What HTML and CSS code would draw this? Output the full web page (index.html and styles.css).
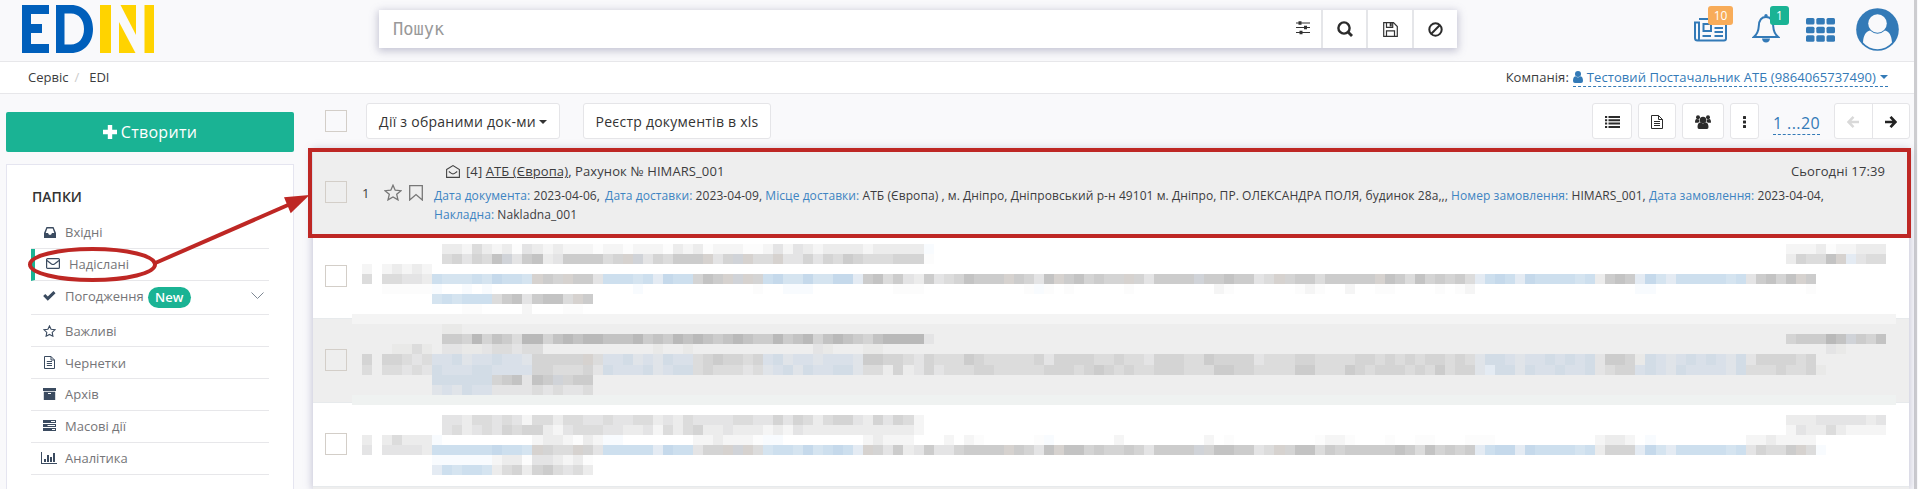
FILE: index.html
```
<!DOCTYPE html>
<html lang="uk">
<head>
<meta charset="utf-8">
<title>EDIN</title>
<link rel="stylesheet" href="styles.css">
</head>
<body>
<div class="page">
  <header class="topbar">
    <svg class="logo" width="132" height="48" viewBox="0 0 132 48">
      <g fill="#005fbb"><path d="M0 0H27V9H9V19H20V28H9V39H27V48H0Z"/><path fill-rule="evenodd" d="M34 0H49C62 0 71 10 71 24S62 48 49 48H34ZM42.500 8.500V39.500H49C57 39.500 62 33 62 24S57 8.500 49 8.500Z"/></g>
      <g fill="#ffd300"><path d="M78 0H89V48H78Z"/><path d="M98.500 0H114V30Z"/><path d="M97 17V48H113.500Z"/><path d="M122.500 0H132V48H122.500Z"/></g>
    </svg>
    <div class="search">
      <div class="search-field"><span class="placeholder">Пошук</span>
        <svg width="14" height="14" viewBox="0 0 14 14" fill="none" stroke="#333"><path d="M0 2H14M0 6.500H14M0 11.500H14" stroke-width="1.200"/><path d="M4 .3V3.700M9.500 4.800V8.200M5 9.800V13.200" stroke-width="3"/></svg>
      </div>
      <div class="search-btn"><svg width="16" height="16" viewBox="0 0 16 16" fill="none" stroke="#2b2b2b"><circle cx="7" cy="7" r="5.600" stroke-width="2.400"/><path d="M11 11L15 15" stroke-width="2.800"/></svg></div>
      <div class="search-btn"><svg width="15" height="15" viewBox="0 0 15 15" fill="none" stroke="#333" stroke-width="1.200"><path d="M.7 .7H10.500L14.300 4.500V14.300H.7ZM3.500 14V8.800H11.500V14M3.500 .7V5.300H9.700V.7"/><path d="M7.700 1V4.500" stroke-width="2"/></svg></div>
      <div class="search-btn"><svg width="15" height="15" viewBox="0 0 15 15" fill="none" stroke="#2b2b2b" stroke-width="2"><circle cx="7.500" cy="7.500" r="6.200"/><path d="M3.300 11.700L11.700 3.300"/></svg></div>
    </div>
    <nav class="user-nav">
      <div class="nav-ico news"><svg width="33" height="24" viewBox="0 0 33 24" fill="none" stroke="#337ab7" stroke-width="2"><path d="M5 1H32V20.500Q32 22.500 30 22.500H3.500Q1 22.500 1 20V4.500H5V20Q5 22.500 3.500 22.500"/><path d="M9.500 6H17V13H9.500ZM20.500 6H29M20.500 10H29M20.500 14H29M8.500 18H17M20.500 18H29"/></svg><span class="badge orange">10</span></div>
      <div class="nav-ico bell"><svg width="28" height="29" viewBox="0 0 28 29"><path d="M14 3C8.500 3 7 8 6.800 12C6.500 17.500 5 20.500 1.800 23H26.200C23 20.500 21.500 17.500 21.200 12C21 8 19.500 3 14 3Z" fill="none" stroke="#337ab7" stroke-width="2"/><path d="M10 24.500H18Q17.500 28.500 14 28.500T10 24.500Z" fill="#337ab7"/><circle cx="14" cy="1.800" r="1.700" fill="#337ab7"/></svg><span class="badge green">1</span></div>
      <svg class="apps" width="29" height="24" viewBox="0 0 29 24" fill="#337ab7"><rect width="8.500" height="6.500" rx="1.500"/><rect x="10.300" width="8.500" height="6.500" rx="1.500"/><rect x="20.500" width="8.500" height="6.500" rx="1.500"/><rect y="8.700" width="8.500" height="6.500" rx="1.500"/><rect x="10.300" y="8.700" width="8.500" height="6.500" rx="1.500"/><rect x="20.500" y="8.700" width="8.500" height="6.500" rx="1.500"/><rect y="17.300" width="8.500" height="6.500" rx="1.500"/><rect x="10.300" y="17.300" width="8.500" height="6.500" rx="1.500"/><rect x="20.500" y="17.300" width="8.500" height="6.500" rx="1.500"/></svg>
      <svg class="avatar" width="43" height="43" viewBox="0 0 43 43"><circle cx="21.500" cy="21.500" r="21.300" fill="#337ab7"/><path d="M7 34.500C7.500 27 10 23.500 14 22.500Q21.500 29 29 22.500C33 23.500 35.500 27 36 34.500A19 19 0 0 1 7 34.500Z" fill="#f9f9fb"/><circle cx="21.500" cy="15.500" r="9.300" fill="#f9f9fb"/></svg>
    </nav>
  </header>

  <div class="crumbs">
    <div class="trail"><span>Сервіс</span><span class="slash">/</span><span>EDI</span></div>
    <div class="company"><span>Компанія:</span><a><svg width="10" height="12" viewBox="0 0 10 12" fill="#337ab7"><circle cx="5" cy="3" r="3"/><path d="M0 10C0 7 1 5.500 2.300 5.300Q5 7.500 7.700 5.300C9 5.500 10 7 10 10Q10 12 8 12H2Q0 12 0 10Z"/></svg>Тестовий Постачальник АТБ (9864065737490)<i class="caret"></i></a></div>
  </div>

  <div class="content">
    <aside class="side">
      <button class="create"><svg width="14" height="14" viewBox="0 0 14 14" fill="#fff"><path d="M4.800 0H9.200V4.800H14V9.200H9.200V14H4.800V9.200H0V4.800H4.800Z"/></svg>Створити</button>
      <div class="folders">
        <h5>ПАПКИ</h5>
        <ul>
          <li><svg width="12" height="11" viewBox="0 0 12 11" fill="#3b4b60"><path fill-rule="evenodd" d="M2.500 0H9.500L12 6V11H0V6ZM3.300 1.500L1.700 6H4L5 7.700H7L8 6H10.300L8.700 1.500Z"/></svg><span>Вхідні</span></li>
          <li class="active"><svg width="14" height="11" viewBox="0 0 14 11" fill="none" stroke="#3b4b60" stroke-width="1.200"><rect x=".6" y=".6" width="12.800" height="9.800" rx="1"/><path d="M1 2.500L5.500 6Q7 7 8.500 6L13 2.500"/></svg><span>Надіслані</span></li>
          <li class="tall"><svg width="13" height="10" viewBox="0 0 13 10" fill="none" stroke="#3b4b60" stroke-width="3"><path d="M1.200 4L4.800 7.600L11.500 1.200"/></svg><span>Погодження</span><b class="new">New</b><svg class="chev" width="13" height="8" viewBox="0 0 13 8" fill="none" stroke="#7d8793"><path d="M.5 .5L6.500 6.500L12.500 .5"/></svg></li>
          <li class="low"><svg width="13" height="12" viewBox="0 0 13 12" fill="none" stroke="#3b4b60" stroke-width="1.100"><path d="M6.500 .9L8.100 4.300L12 4.800L9.200 7.400L9.900 11.200L6.500 9.400L3.100 11.200L3.800 7.400L1 4.800L4.900 4.300Z"/></svg><span>Важливі</span></li>
          <li class="low"><svg width="11" height="13" viewBox="0 0 11 13" fill="none" stroke="#3b4b60"><path d="M.5 .5H7L10.500 4V12.500H.5ZM7 .5V4H10.500M2.800 5.500H8M2.800 7.500H8M2.800 9.500H8"/></svg><span>Чернетки</span></li>
          <li><svg width="13" height="12" viewBox="0 0 13 12" fill="#3b4b60"><path d="M0 0H13V3H0Z"/><path fill-rule="evenodd" d="M.8 3.800H12.200V12H.8ZM5 5V6H8V5Z"/></svg><span>Архів</span></li>
          <li><svg width="13" height="11" viewBox="0 0 13 11" fill="#3b4b60"><path fill-rule="evenodd" d="M0 0H13V3H0ZM8 1V2H12V1ZM0 4H13V7H0ZM4.500 5V6H12V5ZM0 8H13V11H0ZM9 9V10H12V9Z"/></svg><span>Масові дії</span></li>
          <li><svg width="16" height="12" viewBox="0 0 16 12" fill="#3b4b60"><path d="M0 0H1V11H16V12H0ZM3 7H5V10H3ZM6 3H8V10H6ZM9 5H11V10H9ZM12 1H14V10H12Z"/></svg><span>Аналітика</span></li>
        </ul>
      </div>
    </aside>

    <main class="main">
      <div class="tools">
        <i class="check"></i>
        <button class="btn wide1">Дії з обраними док-ми<i class="caret dark"></i></button>
        <button class="btn wide2">Реєстр документів в xls</button>
        <div class="tools-right">
          <button class="btn b1"><svg width="15" height="12" viewBox="0 0 15 12" fill="#2b2b2b"><path d="M0 0H2.200V2H0ZM3.500 0H15V2H3.500ZM0 3.300H2.200V5.300H0ZM3.500 3.300H15V5.300H3.500ZM0 6.600H2.200V8.600H0ZM3.500 6.600H15V8.600H3.500ZM0 10H2.200V12H0ZM3.500 10H15V12H3.500Z"/></svg></button>
          <button class="btn b2"><svg width="12" height="14" viewBox="0 0 12 14" fill="none" stroke="#2b2b2b"><path d="M.5 .5H7.500L11.500 4.500V13.500H.5ZM7.500 .5V4.500H11.500M3 6.500H9M3 8.500H9M3 10.500H9"/></svg></button>
          <button class="btn b3"><svg width="16" height="14" viewBox="0 0 16 14" fill="#2b2b2b"><circle cx="8" cy="5" r="3.200"/><circle cx="3" cy="2.200" r="2"/><circle cx="13" cy="2.200" r="2"/><path d="M2.500 12C2.500 9 3.800 7.600 5.500 7.300Q8 9.500 10.500 7.300C12.200 7.600 13.500 9 13.500 12Q13.500 14 12 14H4Q2.500 14 2.500 12Z"/><path d="M0 7.200C0 5 .8 4 1.500 4L4.300 4.500L4.500 6.500L3.200 7.800H1Q0 7.800 0 7.200ZM16 7.200C16 5 15.200 4 14.500 4L11.700 4.500L11.500 6.500L12.800 7.800H15Q16 7.800 16 7.200Z"/></svg></button>
          <button class="btn b4"><svg width="3" height="12" viewBox="0 0 3 12" fill="#2b2b2b"><rect width="3" height="3" rx=".5"/><rect y="4.500" width="3" height="3" rx=".5"/><rect y="9" width="3" height="3" rx=".5"/></svg></button>
          <a class="range">1 ...20</a>
          <div class="pager">
            <span class="off"><svg width="12" height="12" viewBox="0 0 12 12" fill="none" stroke="currentColor" stroke-width="2.500"><path d="M6.500 .9L1.600 6L6.500 11.100M2 6H12"/></svg></span>
            <span><svg width="12" height="12" viewBox="0 0 12 12" fill="none" stroke="currentColor" stroke-width="2.700"><path d="M5.500 .9L10.400 6L5.500 11.100M10 6H0"/></svg></span>
          </div>
        </div>
      </div>

      <div class="list">
        <div class="row gray">
          <i class="check"></i><span class="num">1</span>
          <svg class="star" width="18" height="17" viewBox="0 0 18 17" fill="none" stroke="#777" stroke-width="1.300"><path d="M9 1.200L11.200 6.200L17 6.700L12.700 10.300L14 15.900L9 13L4 15.900L5.300 10.300L1 6.700L6.800 6.200Z"/></svg>
          <svg class="mark" width="14" height="16" viewBox="0 0 14 16" fill="none" stroke="#777" stroke-width="1.300"><path d="M.7 .7H13.300V15L7 9.500L.7 15Z"/></svg>
          <div class="doc">
            <div class="title"><svg width="14" height="13" viewBox="0 0 14 13" fill="none" stroke="#444" stroke-width="1.100"><path d="M.6 4.500L7 .6L13.400 4.500V12.400H.6ZM2.800 6.500L5.800 8.600Q7 9.300 8.200 8.600L11.200 6.500"/></svg><span>[4] <u>АТБ (Європа)</u>, Рахунок № HIMARS_001</span><time>Сьогодні 17:39</time></div>
            <div class="meta"><em>Дата документа:</em> 2023-04-06, <em class="gap">Дата доставки:</em> 2023-04-09, <em>Місце доставки:</em> АТБ (Європа) , м. Дніпро, Дніпровський р-н 49101 м. Дніпро, ПР. ОЛЕКСАНДРА ПОЛЯ, будинок 28а,,, <em>Номер замовлення:</em> HIMARS_001, <em>Дата замовлення:</em> 2023-04-04,<br><em>Накладна:</em> Nakladna_001</div>
          </div>
        </div>
        <div class="row"><i class="check"></i></div>
        <div class="row gray"><i class="check"></i></div>
        <div class="row"><i class="check"></i></div>
        <div class="row gray last"></div>
        <svg class="mosaic" id="mosaic" width="1544" height="231" shape-rendering="crispEdges"></svg>
      </div>
    </main>
  </div>
</div>
<div class="edge"></div>
<svg class="marks" width="1918" height="489" viewBox="0 0 1918 489" fill="none" stroke="#be2724" stroke-width="4">
  <rect x="310" y="150" width="1599" height="86"/>
  <ellipse cx="92.500" cy="264.500" rx="62.500" ry="15.500"/>
  <path d="M153 264L288 205"/>
  <path d="M309.500 195L284 197.300L290.700 213.300Z" fill="#be2724" stroke="none"/>
</svg>
<script src="mosaic.js"></script>
</body>
</html>
```
FILE: styles.css
```
* { box-sizing: border-box; }
body { margin: 0; height: 489px; overflow: hidden; display: flex; background: #f9f9fb; font: 13px/18px "Open Sans", sans-serif; color: #3c3c3e; }
svg { display: block; flex: none; }
.page { width: 1914px; flex: none; }
.edge { width: 3px; background: #cdcdd0; }
.topbar { height: 61px; display: flex; align-items: flex-start; padding-left: 22px; }
.logo { margin-top: 5px; }
.search { margin: 10px 0 0 225px; width: 1078px; height: 38px; display: flex; background: #fff; box-shadow: 0 2px 8px 1px rgba(120, 120, 155, .42); }
.search-field { flex: 1; display: flex; align-items: center; justify-content: space-between; padding: 0 11px 2px 14px; }
.placeholder { font: 17px/36px "DejaVu Sans Mono", monospace; padding-top: 2px; color: #999; }
.search-btn { width: 45.500px; border-left: 2px solid #e5e6e9; display: flex; align-items: center; justify-content: center; padding-left: 1px; }
.user-nav { display: flex; margin-left: 237px; }
.nav-ico { position: relative; }
.news { margin-top: 18px; width: 33px; }
.bell { margin: 14px 0 0 25px; width: 28px; }
.badge { position: absolute; height: 19px; font-size: 12px; line-height: 19px; text-align: center; color: #fff; border-radius: 3px; }
.orange { left: 14px; top: -12px; width: 25px; background: #f8ac59; }
.green { left: 18px; top: -8px; width: 19px; background: #1ab394; }
.apps { margin: 18px 0 0 26px; }
.avatar { margin: 8px 0 0 21px; }
.crumbs { height: 33px; background: #fff; border-top: 1px solid #e7e7ea; border-bottom: 1px solid #e7e7ea; display: flex; justify-content: space-between; padding: 6px 26px 0 28px; line-height: 18px; }
.trail { display: flex; }
.slash { color: #ccc; margin: 0 10px 0 6px; }
.company { display: flex; gap: 4px; letter-spacing: .06px; }
.company a { display: flex; align-items: center; height: 19px; padding-bottom: 1px; color: #337ab7; border-bottom: 1px dashed #337ab7; }
.company a svg { margin-right: 4px; }
.caret { border: 4px solid transparent; border-top-color: #337ab7; border-bottom: 0; margin-left: 4px; }
.dark { border-top-color: #333; margin-left: 3px; }
.content { display: flex; height: 395px; }
.side { width: 288px; margin: 18px 0 0 6px; }
.create { display: flex; align-items: center; justify-content: center; gap: 4px; width: 288px; height: 40px; border: 0; border-radius: 2px; background: #1ab394; color: #fff; font: 16px "Open Sans", sans-serif; letter-spacing: .3px; }
.folders { margin-top: 12px; height: 325px; background: #fff; border: 1px solid #e5e5f0; border-bottom: 0; padding: 22px 24px 0; }
h5 { margin: 0 0 11px 1px; font: 600 14px/20px "Open Sans", sans-serif; color: #333; }
ul { list-style: none; margin: 0; padding: 0; }
li { height: 32px; display: flex; align-items: center; border-bottom: 1px solid #e7e7ea; padding: 0 0 2px 12px; color: #757578; }
li > svg:first-child { margin-right: 9px; }
li > svg[width="11"] { margin-left: 1px; margin-right: 10px; }
li > svg[width="16"] { margin-left: -2px; margin-right: 8px; }
li > svg[width="12"] { margin-left: 1px; margin-right: 9px; }
li:first-child { height: 31px; }
.low { padding-bottom: 0; }
.active { border-left: 4px solid #1ab394; padding-left: 11px; }
li.tall { height: 34px; padding-bottom: 3px; }
.new { background: #1ab394; color: #fff; font-weight: 600; height: 21px; line-height: 20px; width: 43px; text-align: center; border-radius: 11px; margin: 2px 0 0 4px; }
.chev { margin-left: auto; margin-right: 5px; }
.main { margin-left: 19px; width: 1596px; }
.tools { display: flex; height: 54px; padding: 9px 0 0 12px; }
.check { display: block; width: 22px; height: 22px; border: 1px solid #d3cec8; flex: none; }
.tools .check { margin-top: 7px; }
.btn { height: 36px; border: 1px solid #e5e5e8; border-radius: 3px; background: #fff; padding: 1px 0 0; display: flex; align-items: center; justify-content: center; font: 14px "Open Sans", sans-serif; letter-spacing: .24px; color: #333; }
.wide1 { width: 194px; margin-left: 19px; }
.wide2 { width: 188px; margin-left: 23px; }
.tools-right { display: flex; margin-left: auto; margin-right: -1px; }
.b1 { width: 40px; } .b2 { width: 38px; margin-left: 6px; } .b3 { width: 42px; margin-left: 6px; } .b4 { width: 29px; margin-left: 6px; }
.range { margin: 7px 14px 0 14px; height: 25px; width: 47px; font-size: 16px; letter-spacing: .4px; line-height: 26px; color: #337ab7; border-bottom: 1px dashed #337ab7; white-space: nowrap; }
.pager { display: flex; width: 76px; height: 36px; background: #fff; border: 1px solid #e5e5e8; border-radius: 3px; color: #222; }
.pager span { flex: 1; display: flex; align-items: center; justify-content: center; padding-top: 2px; }
.pager .off { color: #d9d9d9; border-right: 1px solid #e5e5e8; }
.list { position: relative; box-shadow: 0 0 8px 1px rgba(120, 120, 160, .4); margin-top: 2px; }
.row { height: 84px; background: #fff; border-top: 1px solid #e7eaec; padding-left: 12px; display: flex; align-items: flex-start; }
.gray { background: #eee; }
.last { height: 3px; }
.row .check { margin-top: 30px; }
.num { margin: 33px 0 0 15px; width: 22px; }
.star { margin-top: 33px; }
.mark { margin: 34px 0 0 7px; }
.doc { flex: 1; margin: 10px 0 0 11px; }
.title { display: flex; align-items: center; padding: 0 24px 0 12px; height: 20px; letter-spacing: .1px; }
.title span { margin-left: 6px; }
.title time { margin-left: auto; }
.meta { font-size: 12px; line-height: 19px; margin-top: 5px; letter-spacing: .068px; white-space: nowrap; }
em { font-style: normal; color: #3d84c2; }
.gap { margin-left: 2px; }
.mosaic { position: absolute; left: 39px; top: 94px; }
.marks { position: absolute; left: 0; top: 0; }
```
FILE: mosaic.js
```
// Tile colours, keyed by the characters used in the runs below.
const palette = {
  0: '#fcfcfc', 1: '#f5f5f5', 2: '#ececec', 3: '#e4e4e5', 4: '#dcdcdc', 5: '#d4d4d4', 6: '#cccccc', 7: '#c3c3c3', 8: '#b9b9b9',
  w: '#d6d2cf', b: '#d0d3d8', A: '#c5d9eb', B: '#cddfee', C: '#d5e4f0', D: '#e4ebf3', E: '#f8fbfe',
  F: '#d2dce6', G: '#d9e0e9', H: '#e0e4e9', h: '#e9e9e8'
};
// Each entry: row, first column, tiles.
const runs = [
  [0, 9, '22142120321211101101110212' + '0111001313212222122222E'], [0, 143, '1112011222'],
  [1, 9, '453547b36723666645wb354666w35bw44w335354654445550'], [1, 143, '25447wD344'],
  [2, 1, '1'], [2, 3, '12121'],
  [3, 1, '4'], [3, 3, '44332'], [3, 8, 'BCCCBCABBCw65w663BBBCBDABB576wbw5BACCACCAAD67463263457666w6537w675655w536666b6676634w566466666w764756564DBABDABBBBCB2676DACDBBBBBCB36757w6'],
  [4, 3, '00000E..E.E'], [4, 28, 'E'], [4, 40, '0..EEE'], [4, 54, '000'], [4, 67, '0E0.0'], [4, 77, '0'], [4, 86, '10'], [4, 94, '010..1..00'], [4, 108, '0.01'], [4, 128, 'EE'], [4, 145, '0'],
  [5, 8, 'CBCBBB46736774w6'], [6, 11, '00'], [6, 17, '1'], [6, 21, '00'],
  [8, 9, 'hh'],
  [9, 9, '6658576488578788777867687876787668678578765788883'], [9, 143, '566687b657'],
  [10, 4, 'hh4h'], [10, 9, '33hh344344'], [10, 30, 'h..h'], [10, 46, '3h'], [10, 51, 'hh'], [10, 147, '3h'],
  [11, 1, '5'], [11, 3, '55434GGFHGGFGGH55555w4GGFHGHFGG4565545GFHGGHGGGH6655435444654444453555544544355544655553444554444554545455454HFFGHGGFGFGF3665hFGHGFGFGHF3555545'],
  [12, 1, '4'], [12, 3, '44343FGGGFFGGGG5544453FGGGFHGFF4544434HGFHFGGFFH44252353444554444455545654544555444665544446644465455545464' + '55HDFFHFGGFGGF3455GFGHFGGGGHF4445445h'],
  [13, 8, 'FFFFFF56737' + '6b566'], [14, 8, 'HGHFGG3333434334'],
  [17, 9, '332443431442443343344232433334433535424553253541'], [17, 143, '2223333323'],
  [18, 9, '342343545521344433223142452232221213222222222221'], [18, 143, '1322421111'],
  [19, 1, '2'], [19, 3, '24222E'], [19, 18, '1221021EE'], [19, 34, '1121110EE'], [19, 51, '12111'], [19, 59, '1.10'], [19, 68, '0E'], [19, 76, '1'], [19, 85, '1.0'], [19, 96, '0110'], [19, 103, '0'], [19, 106, '00'], [19, 111, '000'], [19, 124, '1221.E'], [19, 139, '1121111'],
  [20, 1, '3'], [20, 3, '33332BBBBBBABBCw544w53BBBBBDABB355wbw4CBBCACBABDw5362363356666w6537w7756556536666b5776634w5774656666676475656DBAADABBBBCB2555DACDBBBBBCB35446w4E'],
  [21, 8, 'EEEEEE1220332120'], [22, 8, 'DBCBBC2452564342']
];
const svg = document.getElementById('mosaic');
// Tiles are 10px; every 37th column and the 12th row are one pixel larger.
const left = i => 10 * i + Math.floor((i + 18) / 37);
const top_ = j => 10 * j + (j > 11 ? 1 : 0);
function tile(col, row, span, color) {
  const r = document.createElementNS('http://www.w3.org/2000/svg', 'rect');
  r.setAttribute('x', left(col));
  r.setAttribute('y', top_(row));
  r.setAttribute('width', left(col + span) - left(col));
  r.setAttribute('height', top_(row + 1) - top_(row));
  r.setAttribute('fill', color);
  svg.appendChild(r);
}
tile(0, 7, 154, '#f4f4f4');
tile(0, 15, 154, '#eff2f1');
for (const [row, start, tiles] of runs)
  [...tiles].forEach((c, i) => { if (c !== '.') tile(start + i, row, 1, palette[c]); });
```
